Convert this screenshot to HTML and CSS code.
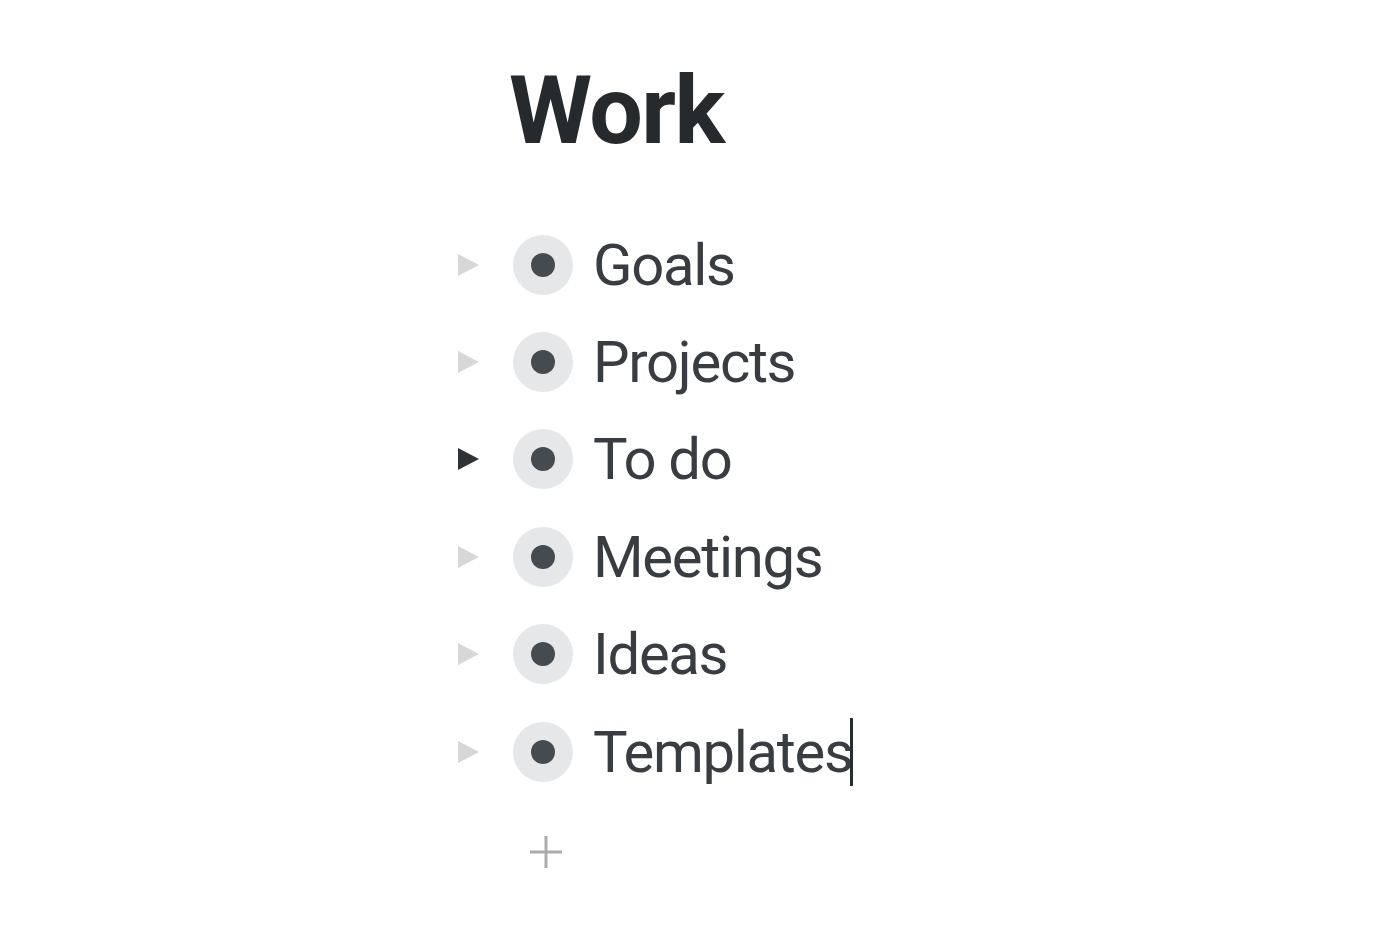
FILE: index.html
```html
<!DOCTYPE html>
<html lang="en">
<head>
<meta charset="utf-8">
<title>Work</title>
<link rel="stylesheet" href="styles.css">
</head>
<body>
<main class="page">
  <h1 class="title">Work</h1>
  <ul class="tree">
    <li class="row">
      <span class="toggle"></span>
      <span class="bullet"><span class="dot"></span></span>
      <span class="label">Goals</span>
    </li>
    <li class="row">
      <span class="toggle"></span>
      <span class="bullet"><span class="dot"></span></span>
      <span class="label">Projects</span>
    </li>
    <li class="row">
      <span class="toggle active"></span>
      <span class="bullet"><span class="dot"></span></span>
      <span class="label">To do</span>
    </li>
    <li class="row">
      <span class="toggle"></span>
      <span class="bullet"><span class="dot"></span></span>
      <span class="label">Meetings</span>
    </li>
    <li class="row">
      <span class="toggle"></span>
      <span class="bullet"><span class="dot"></span></span>
      <span class="label">Ideas</span>
    </li>
    <li class="row">
      <span class="toggle"></span>
      <span class="bullet"><span class="dot"></span></span>
      <span class="label editing">Templates<span class="caret"></span></span>
    </li>
  </ul>
  <div class="add">
    <svg width="36" height="36" viewBox="0 0 36 36" aria-hidden="true">
      <path d="M18 2 V34 M2 18 H34" stroke="#a9abad" stroke-width="3" fill="none"/>
    </svg>
  </div>
</main>
</body>
</html>
```

FILE: styles.css
```css
html, body {
  margin: 0;
  padding: 0;
  background: #ffffff;
}

body {
  font-family: Roboto, "Liberation Sans", Arial, sans-serif;
  color: #373b3f;
}

.page {
  padding: 62px 0 0 456px;
}

.title {
  margin: 0 0 0 53px;
  font-size: 95px;
  line-height: 98px;
  font-weight: 700;
  color: #262a2c;
  letter-spacing: -1.5px;
}

.tree {
  list-style: none;
  margin: 56px 0 0 0;
  padding: 0;
}

.row {
  display: flex;
  align-items: center;
  height: 97.4px;
}

.toggle {
  width: 0;
  height: 0;
  border-top: 11px solid transparent;
  border-bottom: 11px solid transparent;
  border-left: 21px solid #d6d7d8;
  margin-left: 2px;
  margin-right: 34px;
}

.toggle.active {
  border-left-color: #2f3336;
}

.bullet {
  width: 60px;
  height: 60px;
  border-radius: 50%;
  background: #e5e7e9;
  display: flex;
  align-items: center;
  justify-content: center;
  margin-right: 20px;
}

.dot {
  width: 24px;
  height: 24px;
  border-radius: 50%;
  background: #464b50;
}

.label {
  font-size: 58px;
  line-height: 70px;
  font-weight: 400;
  color: #393d41;
  letter-spacing: -1.3px;
  position: relative;
}

.caret {
  position: absolute;
  right: 0;
  top: 1px;
  width: 3px;
  height: 68px;
  background: #2a2d30;
}

.add {
  margin: 34px 0 0 72px;
  height: 36px;
}

.add svg {
  display: block;
}
```
